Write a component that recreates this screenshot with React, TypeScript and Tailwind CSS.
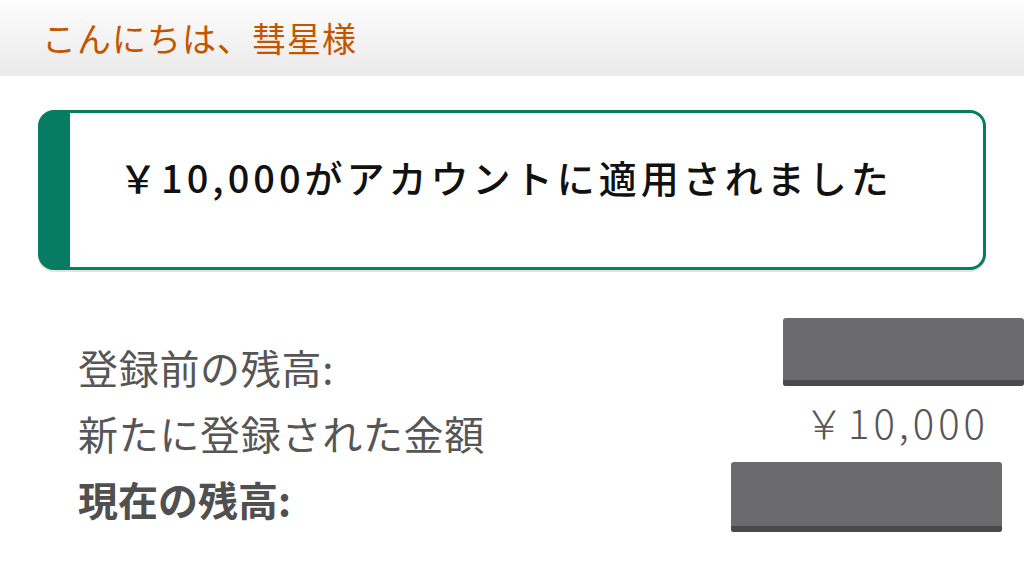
const font = { fontFamily: '"Noto Sans CJK JP", "Noto Sans", sans-serif' }

function Redacted({ className }: { className: string }) {
  return (
    <div className={`flex flex-col rounded-[3px] bg-[#6b6b6d] ${className}`}>
      <div className="flex-1" />
      <div className="h-[6px] rounded-b-[3px] bg-[#4a4a4c]" />
    </div>
  )
}

export default function App() {
  return (
    <div className="w-[1024px] h-[575px] overflow-hidden bg-white" style={font}>
      <header className="h-[76px] flex items-center pl-[42px] bg-gradient-to-b from-[#fdfdfd] to-[#eaeaea]">
        <span className="text-[34px] leading-none text-[#c45500] tracking-[1px]">こんにちは、彗星様</span>
      </header>

      <div className="mx-[38px] mt-[34px] h-[160px] rounded-[16px] border-[3px] border-l-[32px] border-[#067d62] bg-white shadow-[0_2px_0_#e3e3e3] pl-[49px] pt-[45px]">
        <p className="text-[38px] leading-none font-medium text-[#111] tracking-[4px]">
          ￥10,000がアカウントに適用されました
        </p>
      </div>

      <div className="mt-[64px] pl-[78px] pr-[39px] flex flex-col">
        <div className="h-[66px] flex items-center justify-between">
          <span className="text-[40px] leading-none text-[#565656] tracking-[0.7px]">登録前の残高:</span>
          <Redacted className="w-[241px] h-[68px] mb-[30px] mr-[-39px]" />
        </div>
        <div className="h-[66px] flex items-center justify-between">
          <span className="text-[40px] leading-none text-[#565656] tracking-[0.7px]">新たに登録された金額</span>
          <span className="text-[40px] leading-none text-[#565656] font-light mb-[22px] tracking-[4px] mr-[-4px]">￥10,000</span>
        </div>
        <div className="h-[66px] flex items-center justify-between">
          <span className="text-[40px] leading-none font-bold text-[#505050]">現在の残高:</span>
          <Redacted className="w-[271px] h-[70px] mb-[4px] mr-[-17px]" />
        </div>
      </div>
    </div>
  )
}
